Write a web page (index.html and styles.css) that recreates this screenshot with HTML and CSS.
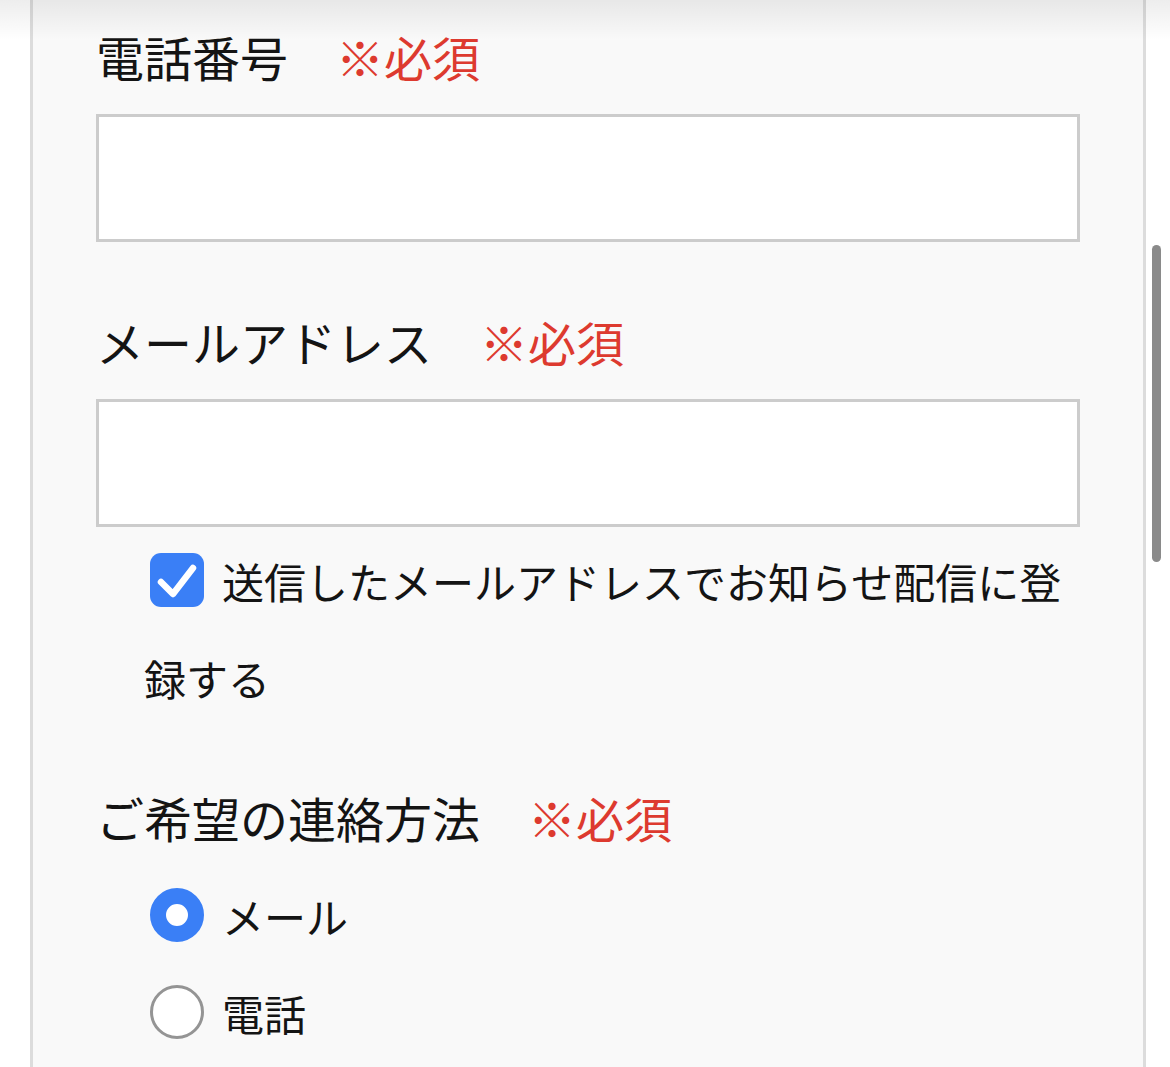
FILE: index.html
```html
<!DOCTYPE html>
<html lang="ja">
<head>
<meta charset="utf-8">
<link rel="stylesheet" href="styles.css">
</head>
<body>
<div class="top-shadow"></div>
<div class="scrollbar"></div>
<main class="panel">
  <div class="field-label"><span>電話番号</span><span class="req">※必須</span></div>
  <div class="input"></div>

  <div class="field-label label-gap"><span>メールアドレス</span><span class="req">※必須</span></div>
  <div class="input"></div>

  <p class="check-line"><svg class="checkbox" viewBox="0 0 54 54" width="54" height="54"><rect x="0" y="0" width="54" height="54" rx="11" fill="#3a7ff6"/><path d="M11 29 L23 41 L43 15" fill="none" stroke="#fff" stroke-width="6.5" stroke-linecap="round" stroke-linejoin="round"/></svg>送信したメールアドレスでお知らせ配信に登録する</p>

  <div class="field-label label-gap3"><span>ご希望の連絡方法</span><span class="req">※必須</span></div>
  <div class="radios">
    <div class="radio-row"><span class="radio checked"></span><span>メール</span></div>
    <div class="radio-row"><span class="radio"></span><span>電話</span></div>
  </div>
</main>
</body>
</html>
```

FILE: styles.css
```css
html, body {
  margin: 0;
  padding: 0;
  background: #ffffff;
}
body {
  font-family: "Noto Sans CJK JP", "Noto Sans", sans-serif;
  color: #141414;
  overflow: hidden;
  height: 1067px;
}
.top-shadow {
  position: absolute;
  top: 0;
  left: 0;
  right: 0;
  height: 40px;
  background: linear-gradient(rgba(0,0,0,0.07), rgba(0,0,0,0));
  pointer-events: none;
  z-index: 2;
}
.scrollbar {
  position: absolute;
  left: 1152px;
  top: 245px;
  width: 9px;
  height: 317px;
  border-radius: 5px;
  background: #8a8a8a;
  z-index: 3;
}
.panel {
  margin-left: 30px;
  width: 1116px;
  box-sizing: border-box;
  min-height: 1200px;
  background: #f9f9f9;
  border-left: 3px solid #dcdcdc;
  border-right: 3px solid #dcdcdc;
  padding: 21px 63px 40px 63px;
}
.field-label {
  display: flex;
  font-size: 48px;
  line-height: 70px;
  height: 70px;
}
.req {
  color: #dd3a2f;
  margin-left: 48px;
}
.label-gap {
  margin-top: 64px;
}
.label-gap3 {
  margin-top: 56px;
}
.input {
  margin-top: 23px;
  height: 128px;
  box-sizing: border-box;
  background: #ffffff;
  border: 3px solid #cccccc;
}
.check-line {
  margin: 5px 0 0 48px;
  font-size: 42px;
  line-height: 97px;
}
.checkbox {
  display: inline-block;
  vertical-align: -8px;
  margin: 0 18px 0 6px;
}
.radios {
  margin-top: 15px;
  margin-left: 54px;
}
.radio-row {
  display: flex;
  align-items: center;
  height: 97px;
  font-size: 42px;
}
.radio {
  width: 54px;
  height: 54px;
  box-sizing: border-box;
  border-radius: 50%;
  border: 3px solid #949494;
  background: #ffffff;
  margin-right: 18px;
  margin-top: -2px;
}
.radio.checked {
  border: 16px solid #3a7ff6;
}
```
